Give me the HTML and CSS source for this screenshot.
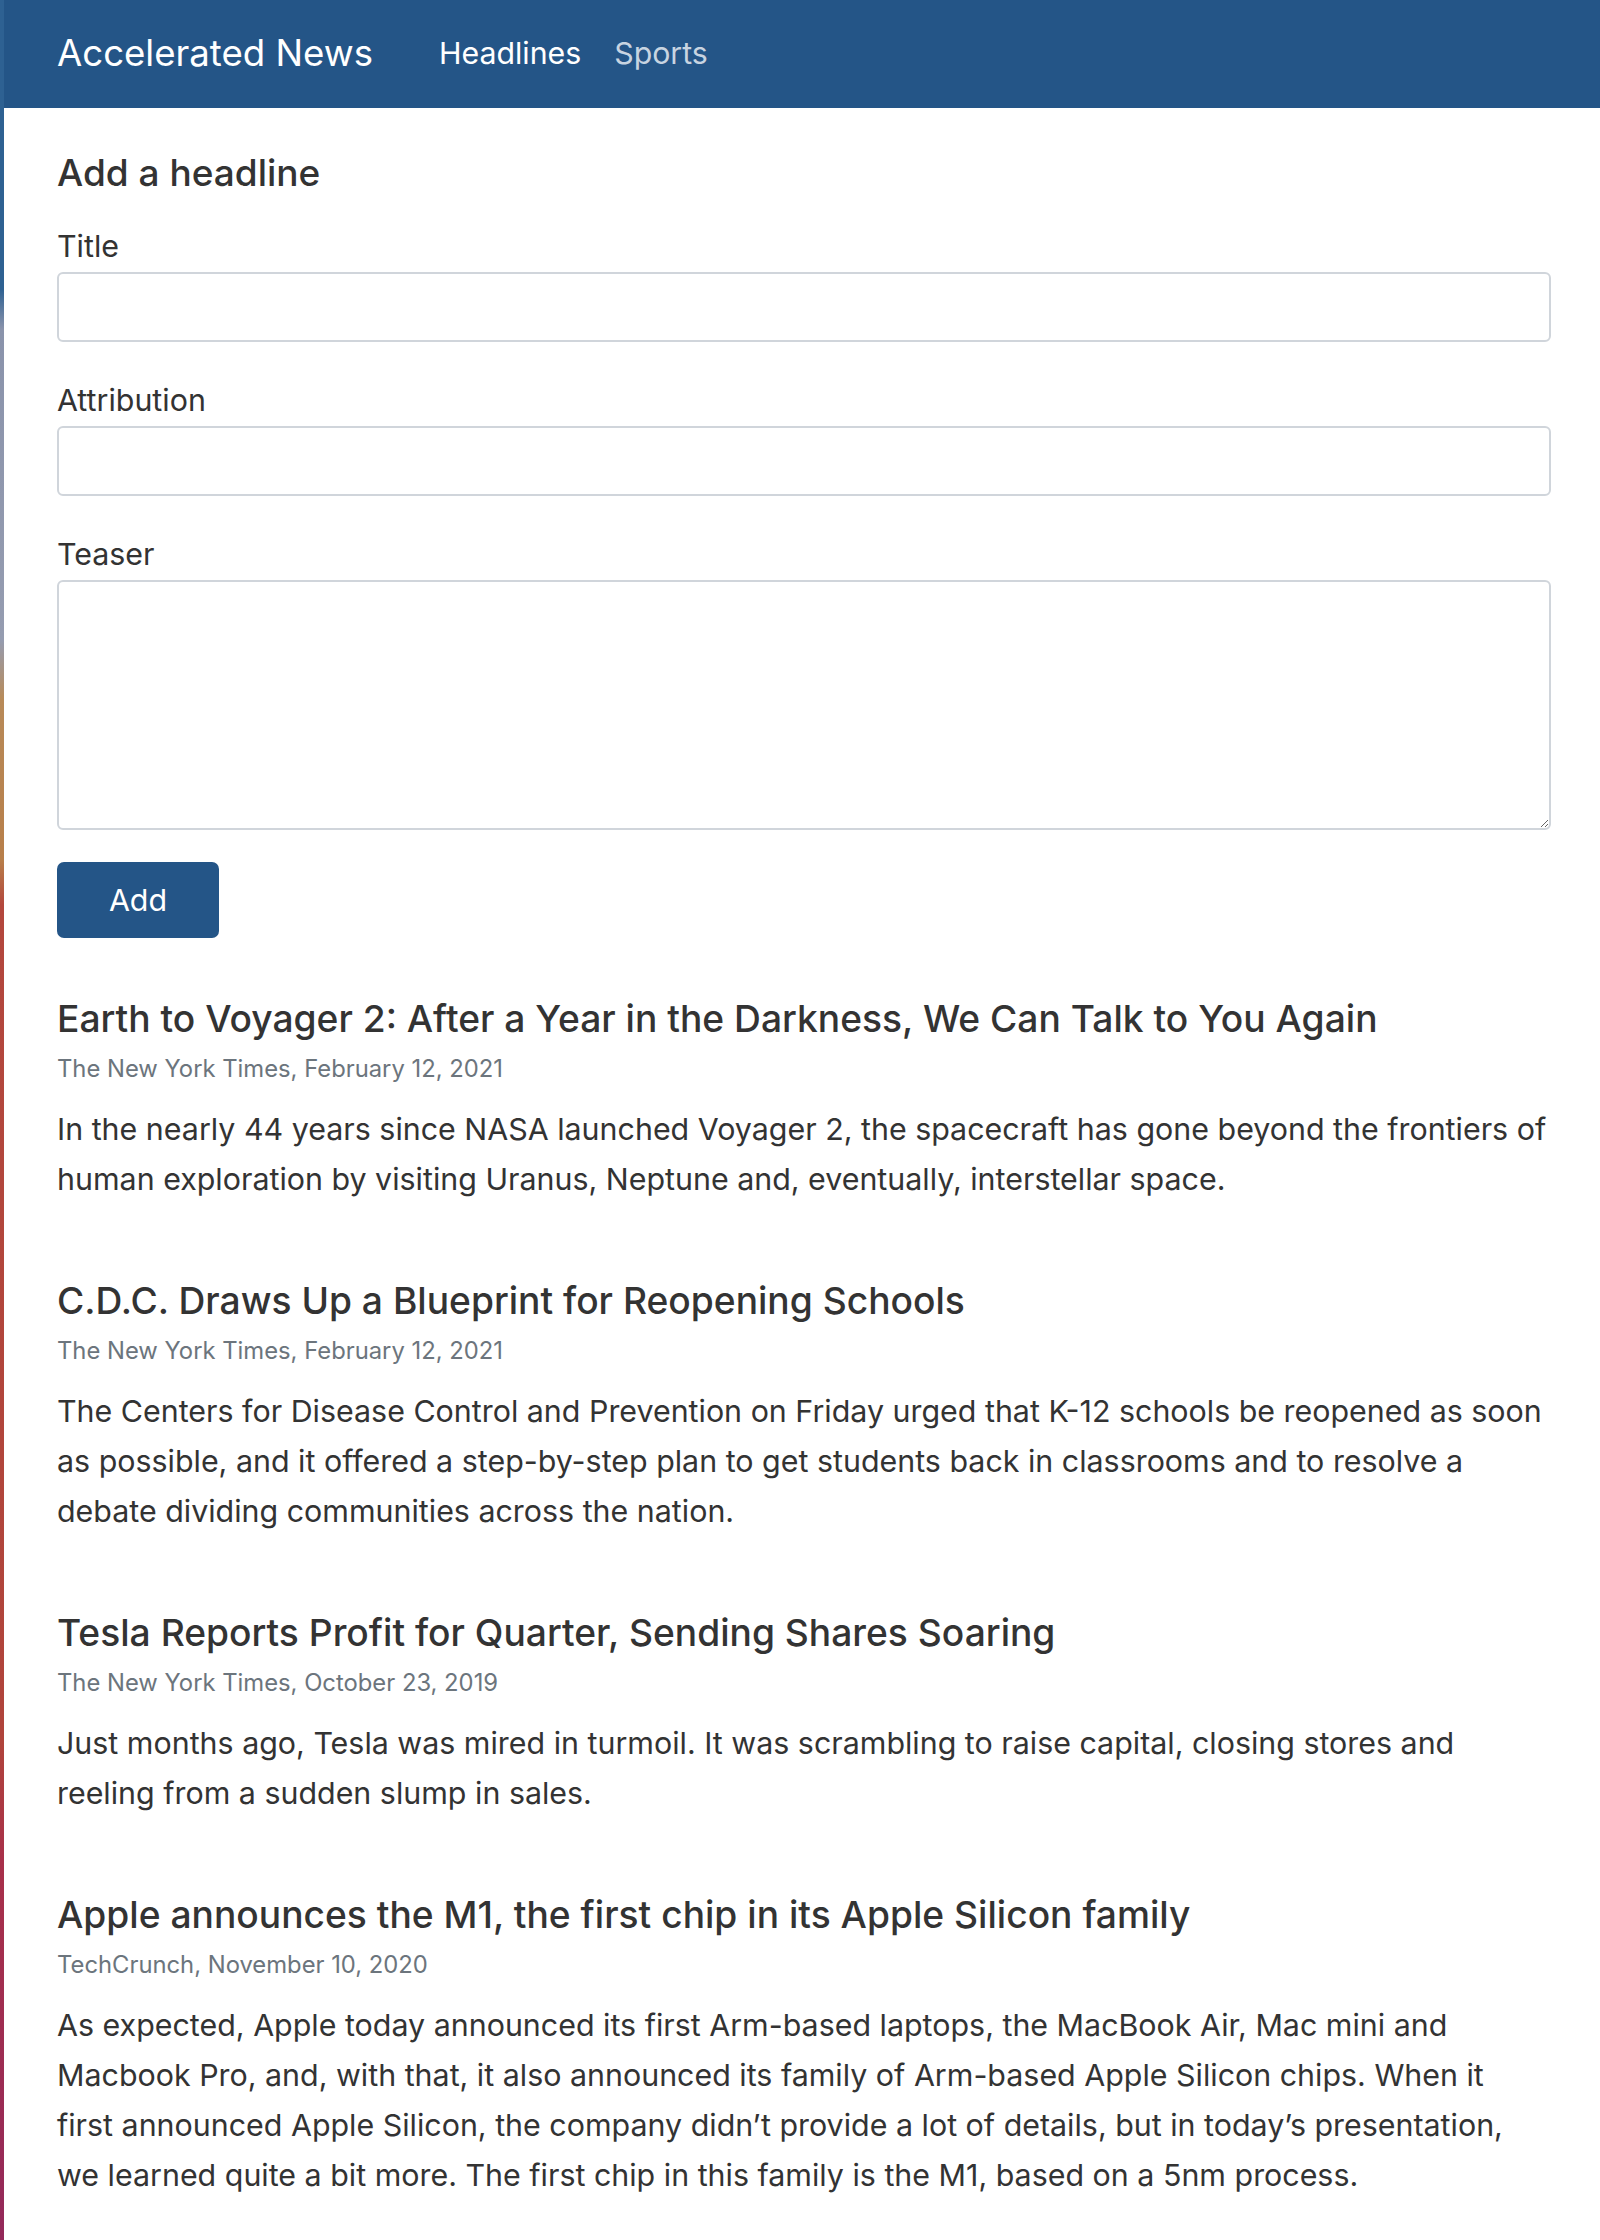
FILE: index.html
```html
<!DOCTYPE html>
<html lang="en">
<head>
<meta charset="utf-8">
<title>Accelerated News</title>
<link rel="stylesheet" href="styles.css">
</head>
<body>
<header class="navbar">
  <a class="brand" href="#">Accelerated News</a>
  <nav class="nav">
    <a class="nav-link active" href="#">Headlines</a>
    <a class="nav-link" href="#">Sports</a>
  </nav>
</header>
<main class="content">
  <form class="add-form">
    <h2 class="form-title">Add a headline</h2>
    <div class="field">
      <label class="label" for="title">Title</label>
      <input class="input" id="title" type="text">
    </div>
    <div class="field">
      <label class="label" for="attribution">Attribution</label>
      <input class="input" id="attribution" type="text">
    </div>
    <div class="field">
      <label class="label" for="teaser">Teaser</label>
      <textarea class="input textarea" id="teaser"></textarea>
    </div>
    <button class="btn" type="button">Add</button>
  </form>

  <section class="articles">
    <article class="article">
      <h3 class="article-title">Earth to Voyager 2: After a Year in the Darkness, We Can Talk to You Again</h3>
      <div class="article-meta">The New York Times, February 12, 2021</div>
      <p class="article-teaser">In the nearly 44 years since NASA launched Voyager 2, the spacecraft has gone beyond the frontiers of human exploration by visiting Uranus, Neptune and, eventually, interstellar space.</p>
    </article>
    <article class="article">
      <h3 class="article-title">C.D.C. Draws Up a Blueprint for Reopening Schools</h3>
      <div class="article-meta">The New York Times, February 12, 2021</div>
      <p class="article-teaser">The Centers for Disease Control and Prevention on Friday urged that K-12 schools be reopened as soon as possible, and it offered a step-by-step plan to get students back in classrooms and to resolve a debate dividing communities across the nation.</p>
    </article>
    <article class="article">
      <h3 class="article-title">Tesla Reports Profit for Quarter, Sending Shares Soaring</h3>
      <div class="article-meta">The New York Times, October 23, 2019</div>
      <p class="article-teaser">Just months ago, Tesla was mired in turmoil. It was scrambling to raise capital, closing stores and reeling from a sudden slump in sales.</p>
    </article>
    <article class="article">
      <h3 class="article-title">Apple announces the M1, the first chip in its Apple Silicon family</h3>
      <div class="article-meta">TechCrunch, November 10, 2020</div>
      <p class="article-teaser article-teaser--narrow">As expected, Apple today announced its first Arm-based laptops, the MacBook Air, Mac mini and Macbook Pro, and, with that, it also announced its family of Arm-based Apple Silicon chips. When it first announced Apple Silicon, the company didn’t provide a lot of details, but in today’s presentation, we learned quite a bit more. The first chip in this family is the M1, based on a 5nm process.</p>
    </article>
  </section>
</main>
</body>
</html>
```
FILE: styles.css
```css
* { box-sizing: border-box; }

html, body {
  margin: 0;
  padding: 0;
  background: #ffffff;
}

body {
  min-height: 2240px;
  font-family: Inter, "Noto Sans", sans-serif;
  font-size: 30.4px;
  color: #333333;
  border-left: 4px solid #2d5f8f;
  border-image: linear-gradient(to bottom,
    #2e6192 0px, #2e6192 290px,
    #8a93ab 330px, #959cb0 640px,
    #b88a58 700px, #b87f4a 860px,
    #b3473d 905px, #b0443b 1740px,
    #a8304a 1860px, #93295a 2240px) 1;
}

/* Navbar */
.navbar {
  display: flex;
  align-items: flex-start;
  height: 108px;
  padding-left: 53px;
  background: #245587;
}

.brand {
  margin-top: 31px;
  font-size: 36.6px;
  line-height: 44px;
  color: #ffffff;
  text-decoration: none;
}

.nav {
  display: flex;
  gap: 33px;
  margin-left: 66px;
  margin-top: 33px;
}

.nav-link {
  font-size: 30.3px;
  line-height: 40px;
  color: #c8d4e1;
  text-decoration: none;
}

.nav-link.active {
  color: #ffffff;
}

/* Content */
.content {
  padding: 42.5px 49px 40px 53px;
}

.form-title {
  margin: 0 0 28px;
  font-size: 37px;
  font-weight: 500;
  line-height: 44px;
  color: #333333;
}

.field {
  margin-bottom: 35px;
}

.label {
  display: block;
  margin-bottom: 3px;
  font-size: 30.4px;
  line-height: 46px;
}

.input {
  display: block;
  width: 100%;
  height: 70px;
  padding: 10px 20px;
  font-family: inherit;
  font-size: 30.4px;
  color: #495057;
  background: #ffffff;
  border: 2px solid #d0d5db;
  border-radius: 6px;
}

.textarea {
  height: 250px;
}

.field:last-of-type {
  margin-bottom: 32.5px;
}

.btn {
  display: block;
  width: 162px;
  height: 76px;
  padding: 0;
  font-family: inherit;
  font-size: 30.4px;
  line-height: 76px;
  color: #ffffff;
  background: #245587;
  border: none;
  border-radius: 7px;
}

/* Articles */
.articles {
  margin-top: 58.5px;
}

.article {
  margin-bottom: 74.5px;
}

.article-title {
  margin: 0 0 11px;
  font-size: 37.2px;
  font-weight: 500;
  line-height: 44px;
  color: #333333;
}

.article-meta {
  margin-bottom: 18.5px;
  font-size: 23.8px;
  line-height: 34px;
  color: #6c757d;
}

.article-teaser {
  margin: 0;
  font-size: 30.4px;
  line-height: 50px;
}

.article-teaser--narrow {
  max-width: 1470px;
}
```
